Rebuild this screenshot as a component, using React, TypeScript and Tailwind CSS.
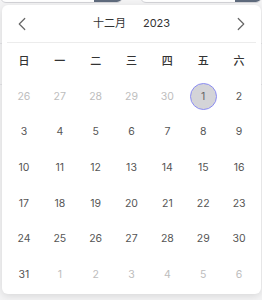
import { ChevronLeft, ChevronRight } from "lucide-react";

const weekdays = ["日", "一", "二", "三", "四", "五", "六"];

type Day = { n: number; muted?: boolean; selected?: boolean };

const days: Day[] = [
  ...[26, 27, 28, 29, 30].map((n) => ({ n, muted: true })),
  ...Array.from({ length: 31 }, (_, i) => ({ n: i + 1, selected: i === 0 })),
  ...[1, 2, 3, 4, 5, 6].map((n) => ({ n, muted: true })),
];

export default function App() {
  return (
    <div
      className="relative h-[300px] w-[262px] overflow-hidden bg-[#f4f4f5]"
      style={{ fontFamily: "Inter, 'Noto Sans CJK SC', sans-serif" }}
    >
      {/* inputs behind the popup, only their bottom edge shows */}
      <div className="-mt-[27px] flex gap-[17px]">
        <div className="flex h-[30px] w-[125px] overflow-hidden rounded-md border border-[#d4d4d8] bg-white">
          <div className="flex-1" />
          <div className="w-[28px] bg-[#5f6b7d]" />
        </div>
        <div className="flex h-[30px] w-[125px] overflow-hidden rounded-md border border-[#d4d4d8] bg-white">
          <div className="flex-1" />
          <div className="w-[26px] bg-[#5f6b7d]" />
        </div>
      </div>
      <div className="mt-[40px] border-t border-[#e4e4e7]" />
      <div className="mt-[40px] border-t border-[#e4e4e7]" />

      <div className="absolute left-[2px] top-[5px] h-[289px] w-[259px] rounded-md bg-white shadow-[0_2px_8px_rgba(0,0,0,0.12)]">
        <div className="flex h-[37px] items-center justify-between px-[9px] text-[#666]">
          <ChevronLeft size={22} strokeWidth={1.3} />
          <div className="flex items-center gap-[17px] text-[11px] text-[#333]">
            <span>十二月</span>
            <span>2023</span>
          </div>
          <ChevronRight size={22} strokeWidth={1.3} />
        </div>
        <div className="mx-[5px] border-t border-[#ececec]" />
        <div className="grid grid-cols-7 px-[4px]">
          {weekdays.map((w) => (
            <div
              key={w}
              className="flex h-[35.7px] items-center justify-center text-[11px] font-medium text-[#333]"
            >
              {w}
            </div>
          ))}
          {days.map((d, i) => (
            <div key={i} className="flex h-[35.7px] items-center justify-center">
              <span
                className={
                  d.selected
                    ? "flex h-[27px] w-[27px] items-center justify-center rounded-full border border-[#8b8cf3] bg-[#d4d4d8] text-[10.5px] text-[#666]"
                    : d.muted
                      ? "text-[10.5px] text-[#bdbdbd]"
                      : "text-[10.5px] text-[#555]"
                }
              >
                {d.n}
              </span>
            </div>
          ))}
        </div>
      </div>
    </div>
  );
}
